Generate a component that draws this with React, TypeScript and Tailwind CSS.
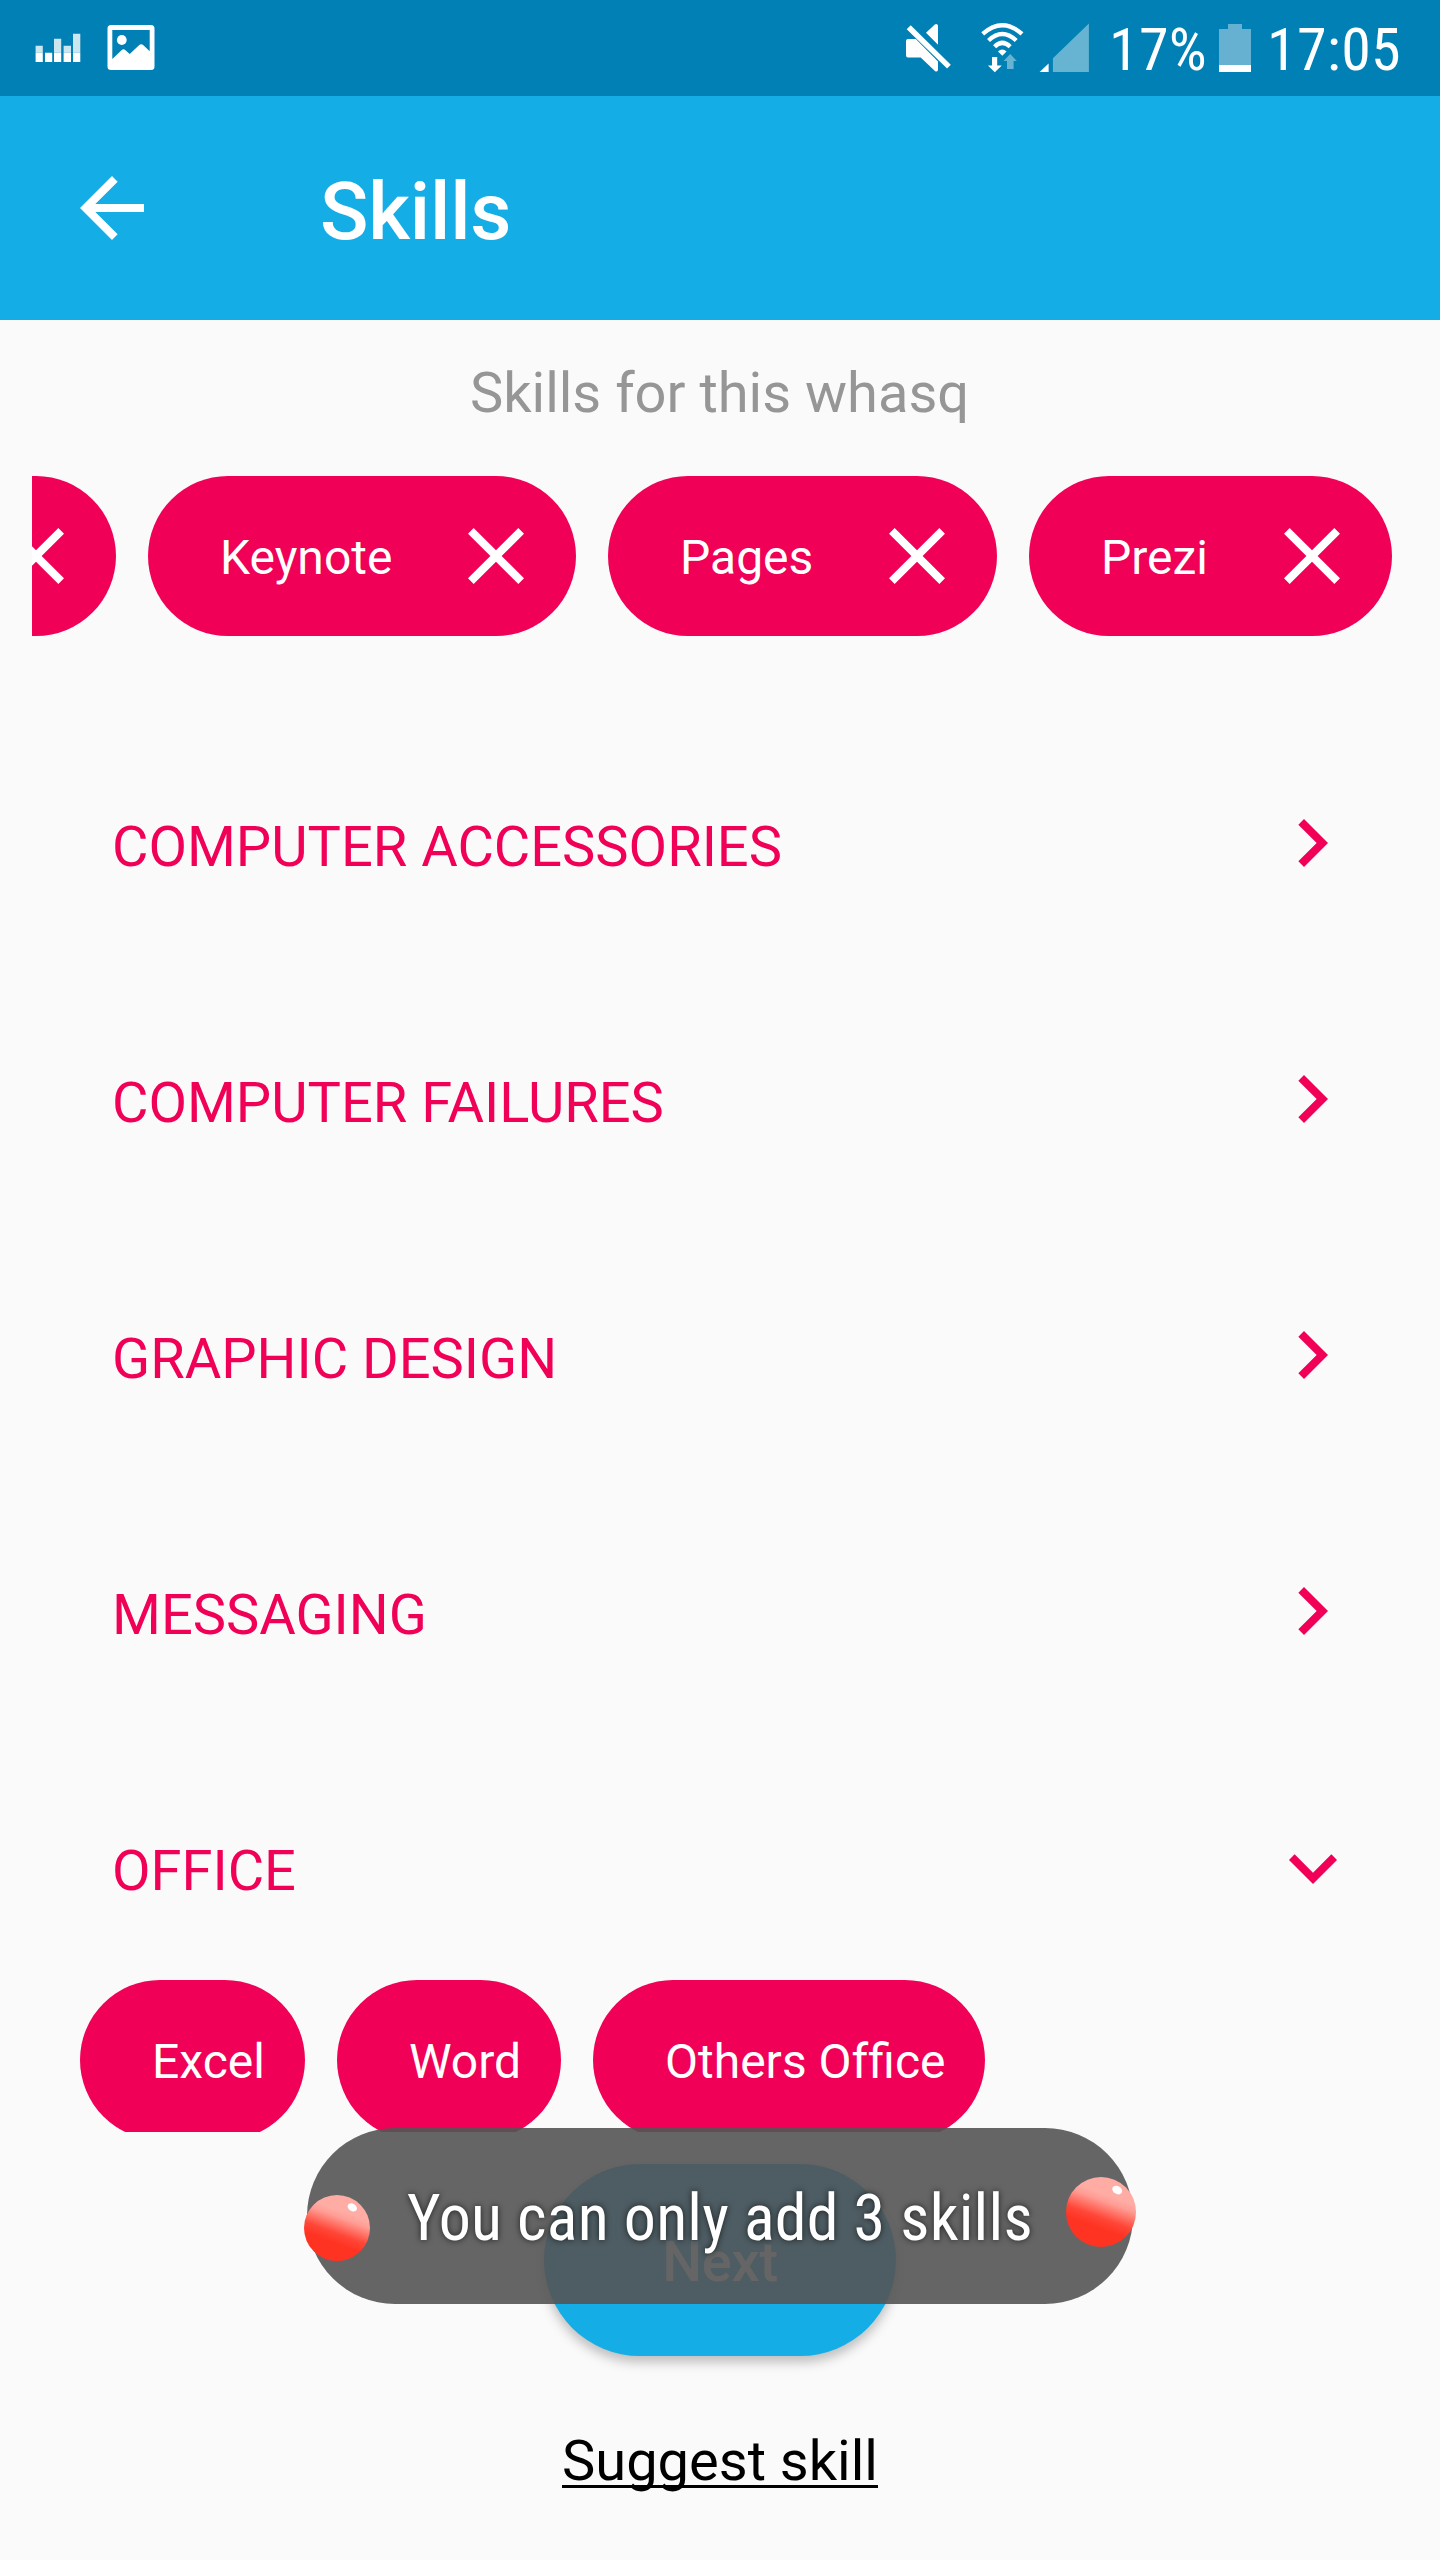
import type { ReactNode } from 'react';

const ARROW_BACK = 'M20 11H7.83l5.59-5.59L12 4l-8 8 8 8 1.41-1.41L7.83 13H20v-2z';
const CLOSE = 'M19 6.41L17.59 5 12 10.59 6.41 5 5 6.41 10.59 12 5 17.59 6.41 19 12 13.41 17.59 19 19 17.59 13.41 12z';
const CHEVRON_RIGHT = 'M10 6L8.59 7.41 13.17 12l-4.58 4.59L10 18l6-6z';
const CHEVRON_DOWN = 'M16.59 8.59L12 13.17 7.41 8.59 6 10l6 6 6-6z';

function Icon({ d, className = '' }: { d: string; className?: string }) {
  return (
    <svg viewBox="0 0 24 24" className={`size-24 shrink-0 fill-current ${className}`} aria-hidden="true">
      <path d={d} />
    </svg>
  );
}

function NotificationIcons() {
  return (
    <svg viewBox="0 0 160 96" className="h-24 w-40" fill="#fff" aria-hidden="true">
      <g opacity=".8">
        <path d="M35.6 45.7h7.2v7h-7.2zM54 38.7h7.2v14H54zM63.6 45.7h7.4v7h-7.4zM73 33.7h7.3v19H73z" />
      </g>
      <path d="M35.6 52.7h7.2V62h-7.2zM45 52.7h7.2V62H45zM54 52.7h7.2V62H54zM63.6 52.7h7.4V62h-7.4zM73 52.7h7.3V62H73z" />
      <path
        fillRule="evenodd"
        d="M111 25h40q3.500 0 3.500 3.500v38q0 3.500-3.500 3.500h-40q-3.500 0-3.500-3.500v-38q0-3.500 3.500-3.500zM112.300 30v29l9.200-8.800q2-1.700 4 0l4.200 3.800 9.300-8.800q2.200-2 4.400 0l6.300 6V30z"
      />
      <ellipse cx="121.800" cy="40" rx="4.900" ry="5.100" />
    </svg>
  );
}

function ConnectivityIcons() {
  return (
    <svg viewBox="900 0 194 96" className="h-24 w-[194px]" fill="#fff" aria-hidden="true">
      <path d="M908 39h7.800L938 61.500V70q-.8 2.300-2.800 1.300L920.700 57.500H908q-2 0-2-2V41q0-2 2-2z" />
      <path d="M926 32.700l8.800-8.200q2.400-1.400 3.200 1v19.200zM910.700 25.200l40.100 39.500-3.700 3.800-40.400-39.300z" />
      <g fill="none" stroke="#fff" strokeWidth="4.300">
        <path d="M982.700 33.900Q1002.300 16.500 1022 33.900" />
        <path d="M988.500 40.500Q1002.300 27.500 1016.200 40.500" />
        <path d="M994.600 46.700Q1002.300 39 1010.200 46.700" />
      </g>
      <path d="M998 51.500q4.300-4 8.600 0l-4.300 4.300z" />
      <path d="M992 57h5.200v8.500h4.600l-7 6.800-6.900-6.800h4.100z" />
      <path d="M1039.600 72l9-8.500V72z" />
      <g opacity=".4">
        <path d="M1007 69h6.600v-8h3.200l-6.600-7-6.600 7h3.400zM1052.900 72V58.300l36-34.800V72z" />
      </g>
    </svg>
  );
}

function BatteryIcon() {
  return (
    <svg viewBox="0 0 32 96" className="h-24 w-8" aria-hidden="true">
      <path d="M0 29h9v-5h14v5h9v36H0z" fill="#66b0d1" />
      <path d="M0 65h32v7H0z" fill="#fff" />
    </svg>
  );
}

function StatusBar() {
  return (
    <div className="flex h-24 items-center bg-[#0180b5]">
      <NotificationIcons />
      <div className="ml-auto flex items-center">
        <ConnectivityIcons />
        <span className="w-[125px] pl-[15px] pt-1 font-['Roboto_Condensed',Roboto,sans-serif] text-[60px] leading-none tracking-[0.3px] whitespace-nowrap [font-stretch:75%]">17%</span>
        <BatteryIcon />
        <span className="w-[189px] pl-4 pt-1 font-['Roboto_Condensed',Roboto,sans-serif] text-[60px] leading-none tracking-[0.3px] whitespace-nowrap [font-stretch:75%]">17:05</span>
      </div>
    </div>
  );
}

function SelectedChip({ label, width }: { label: string; width: string }) {
  return (
    <div className={`flex h-40 shrink-0 items-center justify-between rounded-full bg-[#f00056] pl-[72px] pr-8 text-5xl text-white ${width}`}>
      <span className="pt-1">{label}</span>
      <Icon d={CLOSE} />
    </div>
  );
}

function OfficeChip({ children, width }: { children: ReactNode; width: string }) {
  return (
    <div className={`flex h-40 shrink-0 items-center rounded-full bg-[#f00056] pl-[72px] text-5xl whitespace-nowrap text-white ${width}`}>
      <span className="pt-1">{children}</span>
    </div>
  );
}

function CategoryRow({ label, open = false }: { label: string; open?: boolean }) {
  return (
    <div className="flex h-64 items-center justify-between pl-28 pr-20 text-[56px] text-[#f00056]">
      <span className="pt-2">{label}</span>
      <Icon d={open ? CHEVRON_DOWN : CHEVRON_RIGHT} className={open ? 'mt-0.5 -mr-px' : ''} />
    </div>
  );
}

function Orb({ id, className }: { id: string; className: string }) {
  return (
    <svg viewBox="0 0 66 66" className={`absolute ${className}`} aria-hidden="true">
      <defs>
        <linearGradient id={id} gradientUnits="userSpaceOnUse" x1="39" y1="17" x2="28" y2="47">
          <stop offset="0" stopColor="#ffaca5" />
          <stop offset=".2" stopColor="#ff9d94" />
          <stop offset=".7" stopColor="#ff4637" />
          <stop offset="1" stopColor="#ff3322" />
        </linearGradient>
      </defs>
      <circle cx="33" cy="33" r="33" fill={`url(#${id})`} />
      <ellipse cx="48.300" cy="12.300" rx="5" ry="3.700" transform="rotate(32 48.300 12.300)" fill="#fff" />
    </svg>
  );
}

function Toast() {
  return (
    <div className="absolute top-[2128px] left-[307px] flex h-44 w-[826px] items-center rounded-full bg-[#545454]/90 pl-[100px]">
      <span className="pt-1.5 font-['Roboto_Condensed',Roboto,sans-serif] text-[64px] leading-none tracking-[0.2px] whitespace-nowrap text-white [font-stretch:75%] [text-shadow:0_0_6px_rgba(0,0,0,0.7)]">
        You can only add 3 skills
      </span>
      <Orb id="orb-left" className="top-[67px] -left-[3px] size-[66px]" />
      <Orb id="orb-right" className="top-[49px] -right-[3px] size-[70px]" />
    </div>
  );
}

const CATEGORIES = ['COMPUTER ACCESSORIES', 'COMPUTER FAILURES', 'GRAPHIC DESIGN', 'MESSAGING'];

export default function App() {
  return (
    <div className="relative flex h-[2560px] w-[1440px] flex-col overflow-hidden bg-[#fafafa] font-[Roboto,sans-serif]">
      <header className="text-white">
        <StatusBar />
        <div className="flex h-56 items-center bg-[#15ade5] pl-16">
          <Icon d={ARROW_BACK} />
          <h1 className="pt-2 pl-40 text-[80px] leading-none font-medium tracking-[-0.2px]">Skills</h1>
        </div>
      </header>

      <p className="mt-10 h-[116px] pr-px text-center text-[56px] leading-[66px] text-[#969696]">Skills for this whasq</p>

      <div className="mx-8 flex h-40 justify-end gap-8 overflow-hidden pr-4">
        <SelectedChip label="Numbers" width="w-[440px]" />
        <SelectedChip label="Keynote" width="w-[428px]" />
        <SelectedChip label="Pages" width="w-[389px]" />
        <SelectedChip label="Prezi" width="w-[363px]" />
      </div>

      <main className="mt-[79px] h-[1417px] overflow-hidden">
        {CATEGORIES.map((label) => (
          <CategoryRow key={label} label={label} />
        ))}
        <CategoryRow label="OFFICE" open />
        <div className="-mt-[15px] flex gap-8 pl-20">
          <OfficeChip width="w-[225px]">Excel</OfficeChip>
          <OfficeChip width="w-[224px]">Word</OfficeChip>
          <OfficeChip width="w-[392px]">
            {/* The first f stays separate; only "fi" joins into a ligature. */}
            <span className="[font-variant-ligatures:none]">Others Of</span>
            <span>fice</span>
          </OfficeChip>
        </div>
      </main>

      <footer className="flex flex-col items-center pt-8">
        <button className="h-48 w-[352px] rounded-full bg-[#15ade5] pt-1 text-[56px] font-medium tracking-[-0.2px] text-white shadow-[0_6px_12px_rgba(0,0,0,0.25)]">
          Next
        </button>
        <a className="mt-[72px] text-[56px] leading-[66px] text-black underline decoration-[3px] underline-offset-[5px] [text-decoration-skip-ink:none]">
          Suggest skill
        </a>
      </footer>

      <Toast />
    </div>
  );
}
